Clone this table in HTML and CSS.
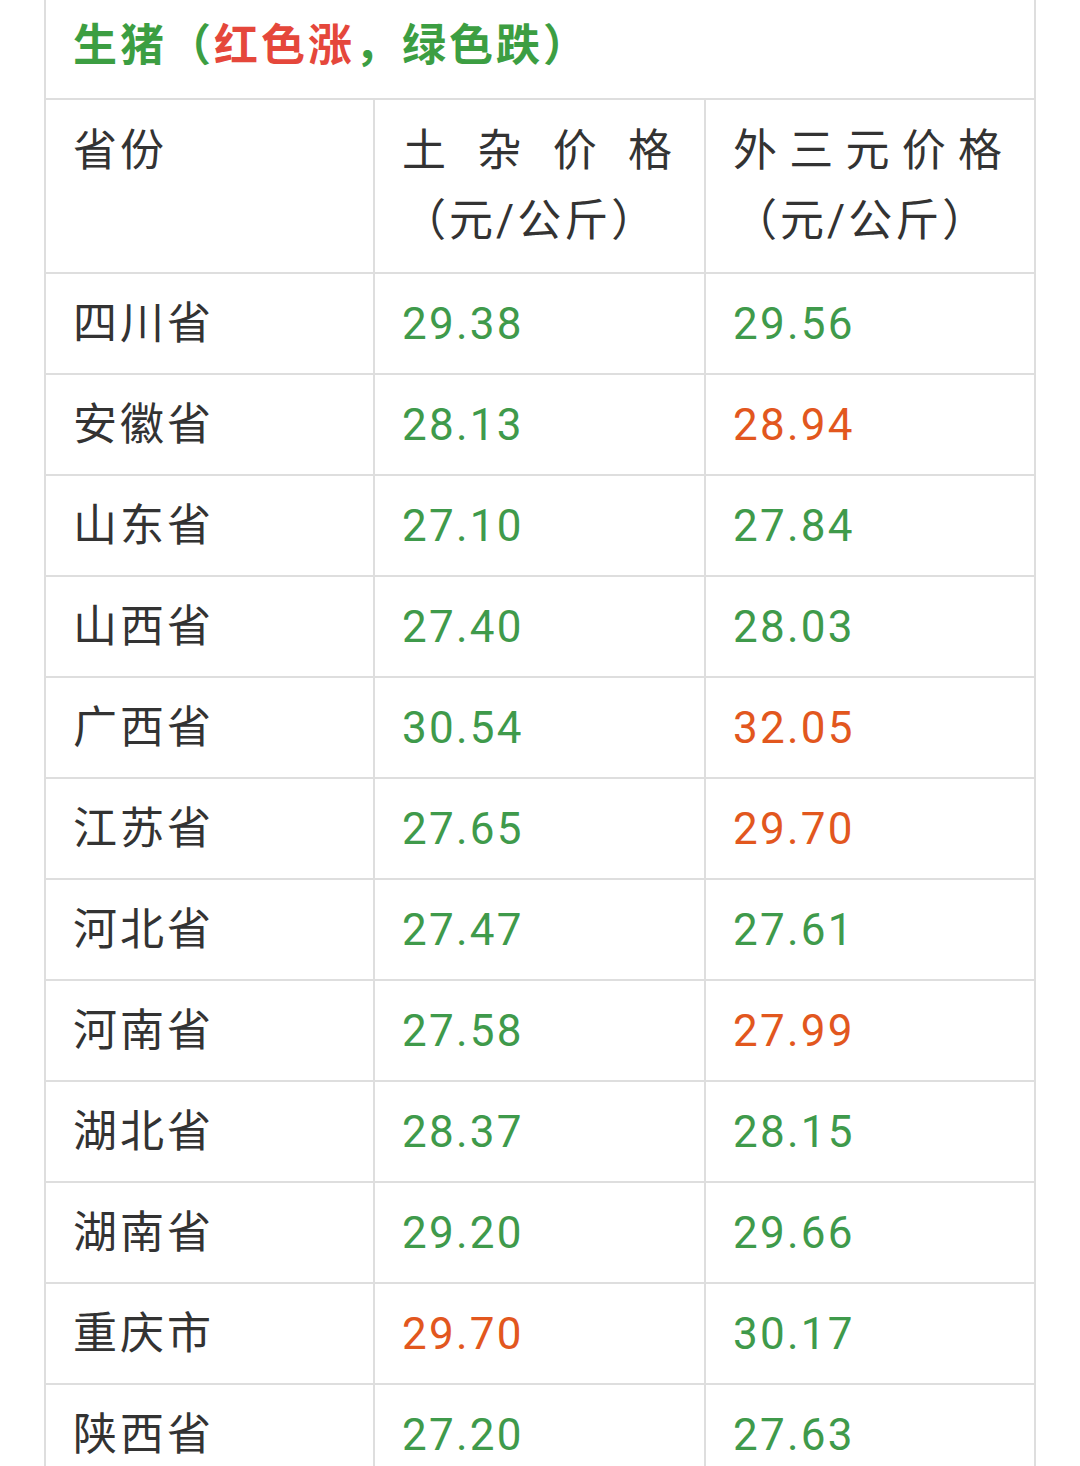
FILE: index.html
```html
<!DOCTYPE html>
<html lang="zh-CN">
<head>
<meta charset="utf-8">
<title>生猪价格</title>
<link rel="stylesheet" href="styles.css">
</head>
<body>
<div class="page">
<table class="price-table">
  <colgroup>
    <col class="c1"><col class="c2"><col class="c3">
  </colgroup>
  <thead>
    <tr class="title-row">
      <th colspan="3" class="title"><span class="g">生猪（</span><span class="r">红色涨</span><span class="g">，绿色跌）</span></th>
    </tr>
    <tr class="head-row">
      <th>省份</th>
      <th class="just">土杂价格（元/公斤）</th>
      <th class="just">外三元价格（元/公斤）</th>
    </tr>
  </thead>
  <tbody>
    <tr><td>四川省</td><td class="down">29.38</td><td class="down">29.56</td></tr>
    <tr><td>安徽省</td><td class="down">28.13</td><td class="up">28.94</td></tr>
    <tr><td>山东省</td><td class="down">27.10</td><td class="down">27.84</td></tr>
    <tr><td>山西省</td><td class="down">27.40</td><td class="down">28.03</td></tr>
    <tr><td>广西省</td><td class="down">30.54</td><td class="up">32.05</td></tr>
    <tr><td>江苏省</td><td class="down">27.65</td><td class="up">29.70</td></tr>
    <tr><td>河北省</td><td class="down">27.47</td><td class="down">27.61</td></tr>
    <tr><td>河南省</td><td class="down">27.58</td><td class="up">27.99</td></tr>
    <tr><td>湖北省</td><td class="down">28.37</td><td class="down">28.15</td></tr>
    <tr><td>湖南省</td><td class="down">29.20</td><td class="down">29.66</td></tr>
    <tr><td>重庆市</td><td class="up">29.70</td><td class="down">30.17</td></tr>
    <tr><td>陕西省</td><td class="down">27.20</td><td class="down">27.63</td></tr>
  </tbody>
</table>
</div>
</body>
</html>
```
FILE: styles.css
```css
html, body {
  margin: 0;
  padding: 0;
  background: #ffffff;
}
.page {
  padding-left: 44px;
  font-family: "Roboto", "Noto Sans CJK SC", sans-serif;
  color: #333333;
}
.price-table {
  border-collapse: collapse;
  table-layout: fixed;
  width: 992px;
  border-left: 2px solid #dedede;
  border-right: 2px solid #dedede;
}
.c1 { width: 329px; }
.c2 { width: 331px; }
.c3 { width: 330px; }
.price-table th,
.price-table td {
  border: 2px solid #dedede;
  font-size: 44px;
  font-weight: 400;
  letter-spacing: 3px;
  line-height: 70px;
  text-align: left;
  vertical-align: top;
  padding: 15px 29px 14px 27px;
}
.price-table .title-row th {
  border-top: none;
  font-weight: 700;
  padding: 11px 29px 17px 27px;
}
.title .g { color: #3c9e42; }
.title .r { color: #e5473b; }
.price-table .head-row th {
  padding: 16px 29px 16px 27px;
}
.price-table .just {
  text-align: justify;
}
.price-table td.down,
.price-table td.up {
  letter-spacing: 2.25px;
}
.down { color: #3f9a4b; }
.up { color: #e2571e; }
```
